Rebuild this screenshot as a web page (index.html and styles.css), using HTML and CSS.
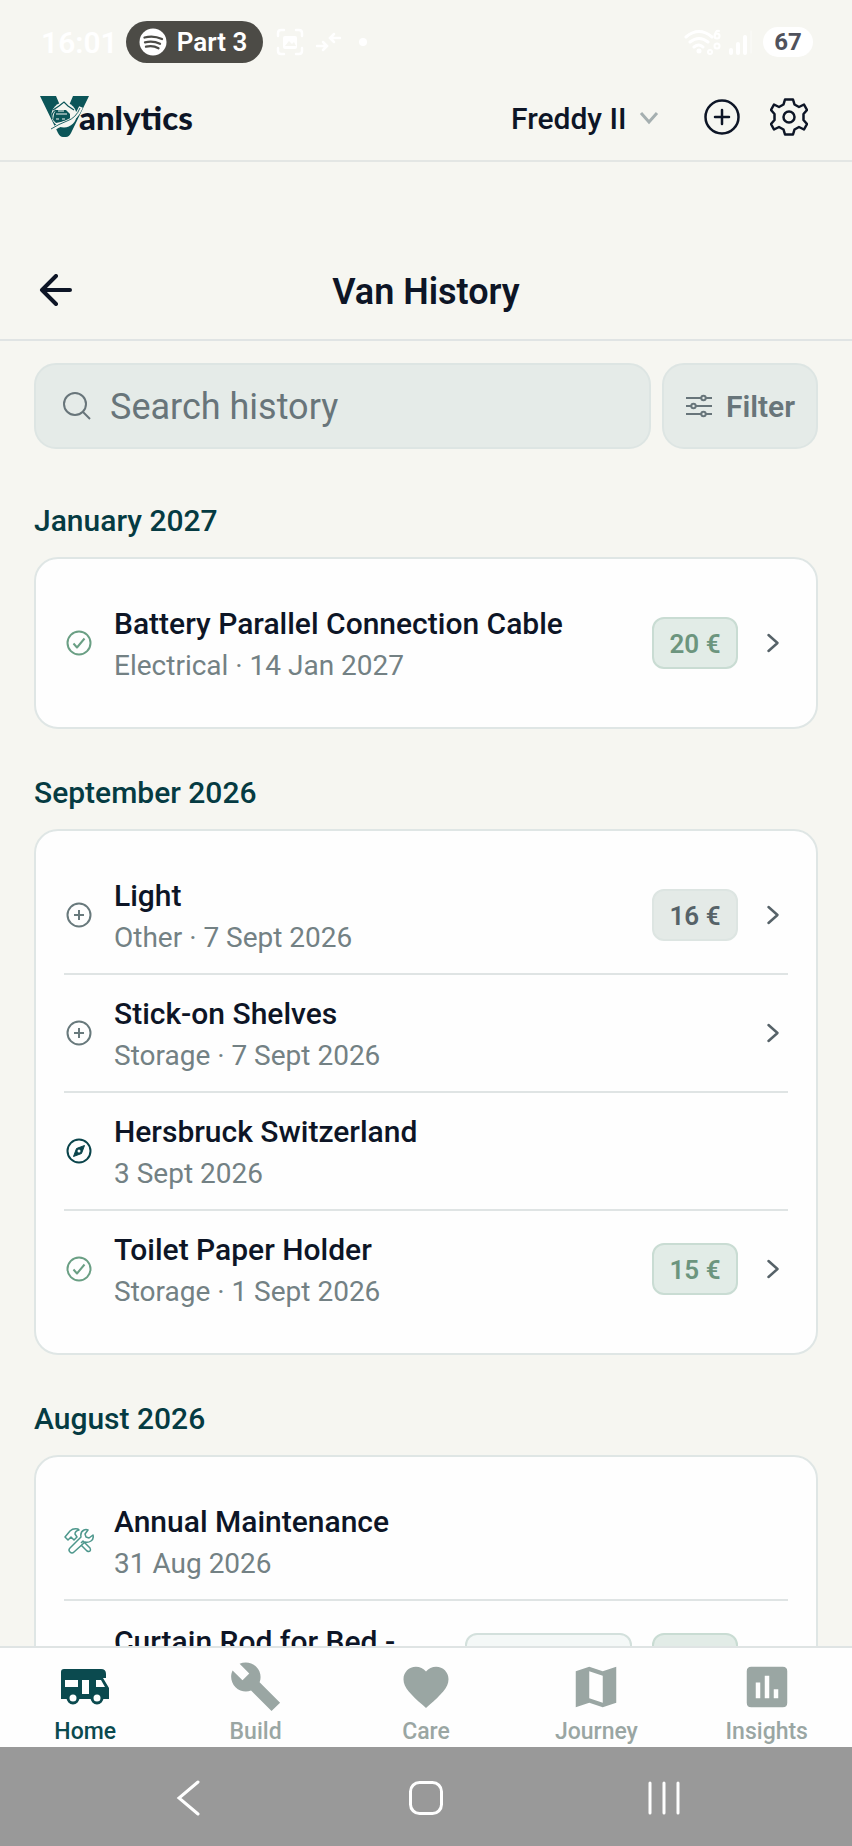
FILE: index.html
```html
<!DOCTYPE html>
<html lang="en">
<head>
  <meta charset="UTF-8">
  <meta name="viewport" content="width=device-width, initial-scale=1.0">
  <title>Vanlytics - Van History</title>
  <link rel="stylesheet" href="styles.css">
</head>
<body>
  <!-- Shared icons -->
  <svg class="sprite" aria-hidden="true">
    <symbol id="icon-check" viewBox="0 0 30 30">
      <circle cx="15" cy="15" r="11.5"/>
      <path d="M9.500 15.500l3.500 4 7.500-9"/>
    </symbol>
    <symbol id="icon-plus" viewBox="0 0 30 30">
      <circle cx="15" cy="15" r="11.5"/>
      <path d="M15 10v10M10 15h10"/>
    </symbol>
    <symbol id="icon-chevron" viewBox="0 0 30 30">
      <path d="M10.500 7l9 8-9 8"/>
    </symbol>
  </svg>

  <div class="status-bar">
    <span class="clock">16:01</span>
    <span class="pill">
      <svg width="28" height="28" viewBox="0 0 28 28" aria-hidden="true">
        <circle cx="14" cy="14" r="13.5" fill="#fff"/>
        <path d="M5.500 9.500q9-2.500 17.500 1.500M6 14.300q8-2 15 1.500M7 18.700q7-1.500 12.500 1.500" fill="none" stroke="#4c4b46" stroke-width="2.300" stroke-linecap="round"/>
      </svg>
      Part 3
    </span>
    <svg class="status-icons" width="92" height="28" viewBox="0 0 92 28" aria-hidden="true">
      <g fill="none" stroke="#fff" stroke-width="2.500" stroke-linecap="round">
        <path d="M2 8V5q0-3 3-3h3M20 2h3q3 0 3 3v3M26 20v3q0 3-3 3h-3M8 26H5q-3 0-3-3v-3"/>
        <path d="M41 18h9M47 14l4 4-4 4M55 10h9M58 6l-4 4 4 4"/>
      </g>
      <rect x="7" y="8" width="14" height="13" rx="2" fill="#fff"/>
      <path d="M9 18l4-5 3 3 2-2 2 4z" fill="#f6f6f1"/>
      <circle cx="87" cy="14" r="4" fill="#fff"/>
    </svg>
    <svg class="signal" width="70" height="30" viewBox="0 0 70 30" aria-hidden="true">
      <g fill="none" stroke="#fff" stroke-width="3" stroke-linecap="round">
        <path d="M3 10q13-11 26 0M7 15q9-7 18 0M11 20q5-4 9 0"/>
        <path d="M36 4q-4-1-4 5" stroke-width="2"/>
        <circle cx="34" cy="9" r="2.500" stroke-width="2"/>
        <circle cx="34" cy="19" r="2.500" stroke-width="2"/>
        <circle cx="27" cy="25" r="2" stroke-width="2"/>
        <path d="M48 23v3M55 17v9M62 10v16" stroke-width="4"/>
        <path d="M68 4v22" stroke-width="1" opacity="0.600"/>
      </g>
      <circle cx="16" cy="24" r="2.500" fill="#fff"/>
    </svg>
    <span class="battery">67</span>
  </div>

  <header class="app-header">
    <a class="logo" href="#">
      <svg width="49" height="42" viewBox="0 0 49 42" aria-hidden="true">
        <path d="M0 0h16l8.500 20L33 0h16L31 37q-2 4-5 4h-3q-3 0-5-4z" fill="#0b5558"/>
        <circle cx="24" cy="19" r="12.500" fill="#f6f6f1"/>
        <path d="M13 14l6-4 5-4 4 4 6 4M12 23q-1-6 4-9" fill="none" stroke="#0b5558" stroke-width="1.200"/>
        <path d="M16 14h10l4 4v6l-14 3-3-3 1-6z" fill="#0b5558"/>
        <path d="M16 18h11M16 23h3M22 23h3M18 15h6" stroke="#f6f6f1" stroke-width="1.200"/>
        <path d="M10 35q8-6 17-9 9-3 14-15" fill="none" stroke="#f6f6f1" stroke-width="4"/>
        <path d="M11 33q8-5 16-8 9-3 13-13" fill="none" stroke="#0b5558" stroke-width="0.900"/>
      </svg>
      <span class="logo-text">anlytics</span>
    </a>
    <label class="van-picker">
      <select aria-label="Van">
        <option>Freddy II</option>
      </select>
      <svg width="20" height="14" viewBox="0 0 20 14" aria-hidden="true"><path d="M2 2l8 9 8-9"/></svg>
    </label>
    <button class="icon-button" type="button" aria-label="Add">
      <svg width="38" height="38" viewBox="0 0 38 38"><circle cx="19" cy="19" r="16.500"/><path d="M19 12v14M12 19h14"/></svg>
    </button>
    <button class="icon-button" type="button" aria-label="Settings">
      <svg width="38" height="38" viewBox="0 0 38 38">
        <path d="M15 1.500h8l1.500 5L29 9l5-2.500 3 5.500-3.500 4v6l3.500 4-3 5.500-5-2.500-4.500 2.500-1.500 5h-8l-1.500-5L9 29l-5 2.500L1 26l3.500-4v-6L1 12l3-5.500L9 9l4.500-2.500z"/>
        <circle cx="19" cy="19" r="5.500"/>
      </svg>
    </button>
  </header>

  <div class="title-bar">
    <button class="back" type="button" aria-label="Back">
      <svg width="34" height="32" viewBox="0 0 34 32"><path d="M31 16H3M17 2L3 16l14 14"/></svg>
    </button>
    <h1>Van History</h1>
  </div>

  <main>
    <form class="search-row">
      <label class="search">
        <svg width="30" height="30" viewBox="0 0 30 30" aria-hidden="true"><circle cx="13" cy="13" r="11"/><path d="M20.500 20.500l7.500 7.500"/></svg>
        <input type="text" placeholder="Search history" aria-label="Search history">
      </label>
      <button class="filter" type="button">
        <svg width="28" height="24" viewBox="0 0 28 24" aria-hidden="true">
          <path d="M1 4h15M21 4h6M1 12h5M11 12h16M1 20h15M21 20h6"/>
          <circle cx="18.500" cy="4" r="2.200"/><circle cx="8.500" cy="12" r="2.200"/><circle cx="18.500" cy="20" r="2.200"/>
        </svg>
        Filter
      </button>
    </form>

    <section>
      <h2>January 2027</h2>
      <ul class="card">
        <li class="entry">
          <svg class="entry-icon done"><use href="#icon-check"/></svg>
          <div class="entry-text">
            <h3>Battery Parallel Connection Cable</h3>
            <p>Electrical · 14 Jan 2027</p>
          </div>
          <span class="badge badge-green">20 €</span>
          <button class="open" type="button" aria-label="Open"><svg><use href="#icon-chevron"/></svg></button>
        </li>
      </ul>
    </section>

    <section>
      <h2>September 2026</h2>
      <ul class="card">
        <li class="entry">
          <svg class="entry-icon"><use href="#icon-plus"/></svg>
          <div class="entry-text">
            <h3>Light</h3>
            <p>Other · 7 Sept 2026</p>
          </div>
          <span class="badge">16 €</span>
          <button class="open" type="button" aria-label="Open"><svg><use href="#icon-chevron"/></svg></button>
        </li>
        <li class="entry">
          <svg class="entry-icon"><use href="#icon-plus"/></svg>
          <div class="entry-text">
            <h3>Stick-on Shelves</h3>
            <p>Storage · 7 Sept 2026</p>
          </div>
          <button class="open" type="button" aria-label="Open"><svg><use href="#icon-chevron"/></svg></button>
        </li>
        <li class="entry">
          <svg class="entry-icon trip" viewBox="0 0 30 30">
            <circle cx="15" cy="15" r="11.500"/>
            <path d="M20.500 9.500l-3 8-8 3 3-8z" fill="currentColor" stroke-width="1"/>
            <circle cx="15" cy="15" r="1.500" fill="#fff" stroke="none"/>
          </svg>
          <div class="entry-text">
            <h3>Hersbruck Switzerland</h3>
            <p>3 Sept 2026</p>
          </div>
        </li>
        <li class="entry">
          <svg class="entry-icon done"><use href="#icon-check"/></svg>
          <div class="entry-text">
            <h3>Toilet Paper Holder</h3>
            <p>Storage · 1 Sept 2026</p>
          </div>
          <span class="badge badge-green">15 €</span>
          <button class="open" type="button" aria-label="Open"><svg><use href="#icon-chevron"/></svg></button>
        </li>
      </ul>
    </section>

    <section>
      <h2>August 2026</h2>
      <ul class="card">
        <li class="entry">
          <svg class="entry-icon service" viewBox="0 0 30 30">
            <path d="M1 11l5-6q3-3 8-2l1 1q-4 1-4 4l2 3-3 3-3-3-3 3z"/>
            <path d="M17 17l2-2 7 7q1 2 0 3t-3 0l-6-6"/>
            <path d="M6 22L17 11q-1-5 3-7 2-1 4 0l-3 4 1 3 3 1 4-3q1 4-2 6-3 2-6 1L10 26q-2 2-4 0t0-4z"/>
          </svg>
          <div class="entry-text">
            <h3>Annual Maintenance</h3>
            <p>31 Aug 2026</p>
          </div>
        </li>
        <li class="entry">
          <span class="entry-icon"></span>
          <div class="entry-text">
            <h3>Curtain Rod for Bed -</h3>
          </div>
          <span class="badge badge-wide"></span>
          <span class="badge badge-green"></span>
          <span class="open"></span>
        </li>
      </ul>
    </section>
  </main>

  <nav class="tab-bar">
    <a class="active" href="#">
      <svg viewBox="0 0 54 54" aria-hidden="true">
        <path fill-rule="evenodd" d="M6 9h37q5 0 5 5v4h-3l6 10v11H3V12q0-3 3-3zM7 20v7h13v-7zM24 20v14h7v-14zM38 20v7h9l-4-7z"/>
        <circle cx="15" cy="38" r="5" fill="#fff" stroke="currentColor" stroke-width="3"/>
        <circle cx="39" cy="38" r="5" fill="#fff" stroke="currentColor" stroke-width="3"/>
      </svg>
      Home
    </a>
    <a href="#">
      <svg viewBox="0 0 24 24" aria-hidden="true"><path d="M22.700 19l-9.100-9.100c.9-2.300.4-5-1.500-6.900-2-2-5-2.400-7.400-1.300L9 6 6 9 1.600 4.700C.4 7.100.9 10.100 2.900 12.100c1.900 1.900 4.600 2.400 6.900 1.500l9.100 9.100z"/></svg>
      Build
    </a>
    <a href="#">
      <svg viewBox="0 0 24 24" aria-hidden="true"><path d="M12 21.350l-1.450-1.320C5.400 15.360 2 12.280 2 8.500 2 5.420 4.420 3 7.500 3c1.740 0 3.410.81 4.500 2.090C13.090 3.810 14.760 3 16.500 3 19.580 3 22 5.420 22 8.500c0 3.780-3.400 6.860-8.550 11.540z"/></svg>
      Care
    </a>
    <a href="#">
      <svg viewBox="0 0 24 24" aria-hidden="true"><path fill-rule="evenodd" d="M21 3l-6 2-6-2-6 2v16l6-2 6 2 6-2zM9 5l6 2v12l-6-2z"/></svg>
      Journey
    </a>
    <a href="#">
      <svg viewBox="0 0 24 24" aria-hidden="true"><path fill-rule="evenodd" d="M5 3h14q2 0 2 2v14q0 2-2 2H5q-2 0-2-2V5q0-2 2-2zM7 10v7h2v-7zM11 7v10h2V7zM15 13v4h2v-4z"/></svg>
      Insights
    </a>
  </nav>

  <div class="system-nav">
    <button type="button" aria-label="System back"><svg viewBox="0 0 36 36"><path d="M28 2L9 18l19 16"/></svg></button>
    <button type="button" aria-label="System home"><svg viewBox="0 0 36 36"><rect x="2.500" y="2.500" width="31" height="31" rx="9"/></svg></button>
    <button type="button" aria-label="Recent apps"><svg viewBox="0 0 36 36"><path d="M4 3v30M18 3v30M32 3v30"/></svg></button>
  </div>
</body>
</html>
```
FILE: styles.css
```css
* {
  box-sizing: border-box;
}
body {
  font-family: Roboto, Arial, sans-serif;
  margin: 0;
  height: 100vh;
  display: flex;
  flex-direction: column;
  background-color: #f6f6f1;
  color: #0d1526;
}
h1, h2, h3, p, ul {
  margin: 0;
  padding: 0;
}
button, select, input {
  font: inherit;
  color: inherit;
  background: none;
  border: none;
  padding: 0;
}
button {
  cursor: pointer;
}
svg {
  display: block;
  flex-shrink: 0;
}
.sprite {
  position: absolute;
  width: 0;
  height: 0;
}

/* Phone status bar */
.status-bar {
  display: flex;
  align-items: center;
  height: 74px;
  padding: 10px 39px 0 41px;
  color: #fff;
  flex-shrink: 0;
}
.clock {
  font-size: 30px;
  font-weight: 600;
}
.pill {
  display: flex;
  align-items: center;
  gap: 10px;
  height: 42px;
  margin-left: 8px;
  padding: 0 16px 0 13px;
  border-radius: 21px;
  background-color: #4c4b46;
  font-size: 26px;
  font-weight: 600;
}
.status-icons {
  margin-left: 13px;
}
.signal {
  margin-left: auto;
}
.battery {
  width: 50px;
  margin-left: 10px;
  border-radius: 15px;
  background-color: #fff;
  color: #50525c;
  font-size: 24px;
  font-weight: 700;
  line-height: 30px;
  text-align: center;
}

/* App header */
.app-header {
  display: flex;
  align-items: center;
  height: 88px;
  padding: 0 44px 0 40px;
  border-bottom: 2px solid #e3e6e4;
  flex-shrink: 0;
}
.logo {
  display: flex;
  align-items: center;
  margin-right: auto;
  color: #0d1526;
  text-decoration: none;
}
.logo-text {
  margin-left: -10px;
  font-family: Lato, sans-serif;
  font-size: 33px;
  font-weight: 900;
  line-height: 38px;
}
.van-picker {
  display: flex;
  align-items: center;
  gap: 12px;
  margin-right: 44px;
  padding-top: 2px;
  font-size: 30px;
  font-weight: 500;
}
.van-picker select {
  appearance: none;
}
.van-picker svg {
  fill: none;
  stroke: #a5afb0;
  stroke-width: 3;
}
.icon-button svg {
  fill: none;
  stroke: #0d1526;
  stroke-width: 2.5;
  stroke-linejoin: round;
  stroke-linecap: round;
}
.icon-button + .icon-button {
  margin-left: 29px;
}

/* Page title */
.title-bar {
  display: grid;
  grid-template-columns: 34px 1fr 34px;
  align-items: start;
  padding: 108px 39px 24px;
  border-bottom: 2px solid #e0e4e4;
  flex-shrink: 0;
}
.title-bar h1 {
  font-size: 36px;
  font-weight: 600;
  line-height: 45px;
  text-align: center;
}
.back {
  padding-top: 4px;
}
.back svg {
  fill: none;
  stroke: #0d1526;
  stroke-width: 4;
  stroke-linecap: round;
  stroke-linejoin: round;
}

main {
  flex: 1;
  min-height: 0;
  overflow: hidden;
  padding: 22px 34px 0;
}
.search-row {
  display: flex;
  gap: 11px;
  margin-bottom: 8px;
}
.search, .filter {
  display: flex;
  align-items: center;
  height: 86px;
  border: 2px solid #dde5e3;
  border-radius: 22px;
  background-color: #e5ebe8;
  color: #68757a;
}
.search {
  flex: 1;
  gap: 18px;
  padding: 0 26px;
}
.search input {
  flex: 1;
  min-width: 0;
  padding-top: 2px;
  font-size: 36px;
  outline: none;
}
.search input::placeholder {
  color: #68757a;
  opacity: 1;
}
.search svg, .filter svg {
  fill: none;
  stroke: #68757a;
  stroke-width: 2;
}
.filter {
  gap: 13px;
  padding: 0 21px;
  font-size: 30px;
  font-weight: 600;
}

/* History lists */
section {
  padding-top: 46px;
}
h2 {
  margin-bottom: 18px;
  color: #053b42;
  font-size: 30px;
  font-weight: 500;
  line-height: 36px;
}
.card {
  list-style: none;
  padding: 26px 28px;
  border: 2px solid #dfe6e5;
  border-radius: 24px;
  background-color: #fefefe;
}
.entry {
  display: flex;
  align-items: center;
  gap: 20px;
  min-height: 116px;
}
.entry + .entry {
  min-height: 118px;
  border-top: 2px solid #dfe4e4;
}
.entry-icon {
  width: 30px;
  height: 30px;
  fill: none;
  stroke: currentColor;
  stroke-width: 2;
  stroke-linejoin: round;
  color: #68797c;
}
.entry-icon.done {
  color: #6a9f84;
}
.entry-icon.trip {
  color: #0a444b;
}
.entry-icon.service {
  color: #4d978c;
  stroke-width: 1.5;
}
.entry-text {
  flex: 1;
  min-height: 84px;
  padding-top: 4px;
}
.entry-text h3 {
  font-size: 30px;
  font-weight: 500;
  line-height: 42px;
}
.entry-text p {
  color: #738184;
  font-size: 28px;
  line-height: 42px;
}
.badge {
  min-width: 86px;
  height: 52px;
  border: 2px solid #dde5e2;
  border-radius: 12px;
  background-color: #e4eae7;
  color: #566268;
  font-size: 26px;
  font-weight: 600;
  line-height: 50px;
  text-align: center;
}
.badge-green {
  border-color: #c9dcd3;
  background-color: #e2ece7;
  color: #6c957e;
}
.badge-wide {
  min-width: 167px;
  border-color: #d3e0dc;
  background-color: #f4f8f7;
}
.open {
  width: 30px;
}
.open svg {
  width: 30px;
  height: 30px;
  fill: none;
  stroke: #566268;
  stroke-width: 2.5;
  stroke-linecap: round;
  stroke-linejoin: round;
}

/* Bottom tabs */
.tab-bar {
  display: grid;
  grid-template-columns: repeat(5, 1fr);
  height: 101px;
  padding-top: 12px;
  border-top: 2px solid #dfe4e4;
  background-color: #fefefe;
  flex-shrink: 0;
}
.tab-bar a {
  display: flex;
  flex-direction: column;
  align-items: center;
  gap: 2px;
  color: #9aa6a3;
  font-size: 23px;
  font-weight: 500;
  line-height: 32px;
  text-decoration: none;
}
.tab-bar svg {
  width: 54px;
  height: 54px;
  fill: currentColor;
}
.tab-bar .active {
  color: #0b4a4f;
}

/* Android navigation */
.system-nav {
  display: flex;
  align-items: center;
  justify-content: center;
  gap: 202px;
  height: 99px;
  padding-top: 2px;
  background-color: #999;
  flex-shrink: 0;
}
.system-nav svg {
  width: 36px;
  height: 36px;
  fill: none;
  stroke: #fff;
  stroke-width: 3;
  stroke-linecap: round;
}
```
